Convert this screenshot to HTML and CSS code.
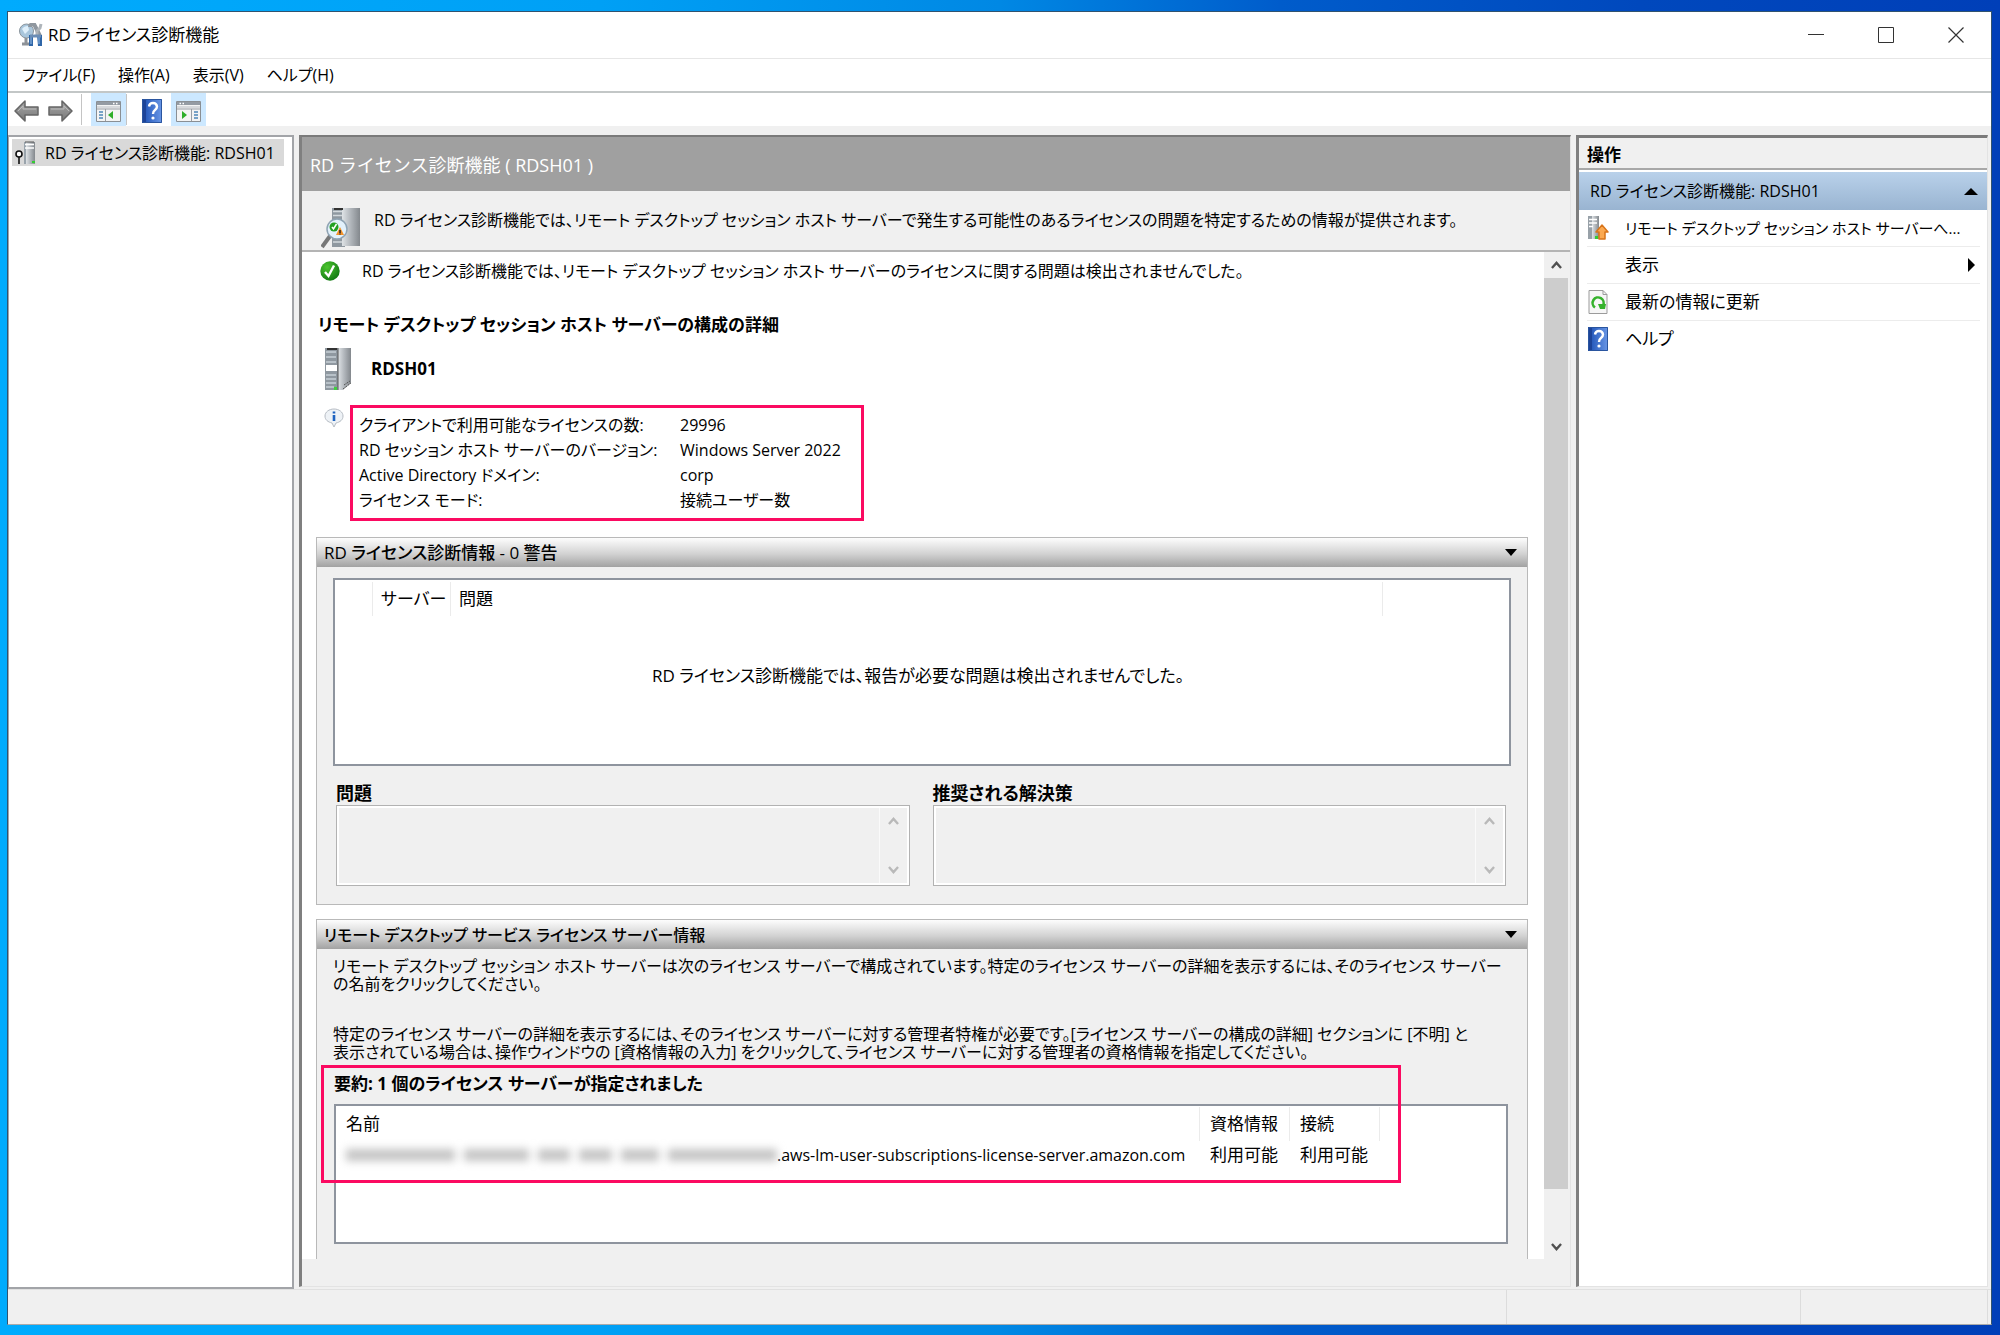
FILE: index.html
```html
<!DOCTYPE html>
<html lang="ja">
<head>
<meta charset="utf-8">
<meta name="viewport" content="width=device-width, initial-scale=1">
<title>RD ライセンス診断機能</title>
<link rel="stylesheet" href="styles.css">
</head>
<body>
<svg width="0" height="0" class="defs" aria-hidden="true">
  <defs>
    <linearGradient id="steel" x1="0" x2="1"><stop offset="0" stop-color="#dfe3e6"/><stop offset=".45" stop-color="#b4b9be"/><stop offset="1" stop-color="#83888d"/></linearGradient>
    <linearGradient id="grey" x1="0" x2="0" y1="0" y2="1"><stop offset="0" stop-color="#a8a8a8"/><stop offset="1" stop-color="#777"/></linearGradient>
    <linearGradient id="book" x1="0" x2="1"><stop offset="0" stop-color="#1d4aa4"/><stop offset=".25" stop-color="#2c5fc0"/><stop offset="1" stop-color="#6a97e6"/></linearGradient>
    <radialGradient id="ok" cx=".35" cy=".3" r=".8"><stop offset="0" stop-color="#4cc52f"/><stop offset="1" stop-color="#0d7410"/></radialGradient>
    <symbol id="i-tower" viewBox="0 0 28 44">
      <path d="M1 1h13v42H1z" fill="#8f98a0"/><path d="M14 1h13v35l-8 7h-5z" fill="url(#steel)"/>
      <path d="M14 1v42" stroke="#555" stroke-width="1"/>
      <path d="M2 5h10M2 10h10M2 15h10M2 28h10M2 32h10M2 36h10M2 40h8" stroke="#c6ced5" stroke-width="1.500"/>
      <path d="M3 2h10" stroke="#333" stroke-width="2"/><path d="M2 18h11v6H2z" fill="#fff"/>
      <path d="M10 40h3v3h-3z" fill="#3fd03f"/><path d="M19 42l8-6M20 38l6-4" stroke="#555" stroke-dasharray="2 1"/>
    </symbol>
    <symbol id="i-help" viewBox="0 0 20 24">
      <path d="M0 0h20v24H0z" fill="url(#book)"/><path d="M0 0h4v24H0z" fill="#1c4398"/><path d="M.5.5h19v23H.5z" fill="none" stroke="#2a559f"/>
      <path d="M7 7.500Q7.500 4 11 4t4 3.500q0 2-2 3.500t-2 4" fill="none" stroke="#fff" stroke-width="2.400"/><circle cx="11" cy="19" r="1.600" fill="#fff"/>
    </symbol>
    <symbol id="i-back" viewBox="0 0 25 22"><path d="M1 11 11 1v6h13v8H11v6z" fill="url(#grey)" stroke="#666" stroke-width="1.500" stroke-linejoin="round"/><path d="M4 11l5-5v3h13" fill="none" stroke="#bbb"/></symbol>
    <symbol id="i-pane" viewBox="0 0 25 21">
      <path d="M.5.5h24v20H.500z" fill="#f4f4f4" stroke="#8a8f94"/><path d="M1 1h23v3H1z" fill="#949ba3"/><path d="M17 2.500h1.500M20 2.500h1.500" stroke="#fff" stroke-width="1.500"/>
      <path d="M1 6h23" stroke="#b9bec4"/><path d="M9.500 8v12M1 8h23" stroke="#9a9fa5"/><path d="M3 11h4M3 14h4M3 17h4" stroke="#4d86b8" stroke-width="1.500"/>
    </symbol>
    <symbol id="i-up" viewBox="0 0 10 10"><path d="M1.500 7 5 3l3.500 4" fill="none" stroke="currentColor" stroke-width="1.800"/></symbol>
  </defs>
</svg>

<div class="window">
  <header class="titlebar">
    <svg class="app-icon" viewBox="0 0 24 24">
      <circle cx="7.500" cy="8" r="7" fill="#a9c6dc" stroke="#8a949c"/><path d="M3 6q2-3 6-3l1 4-4 4z" fill="#dfeffa"/>
      <path d="M7 15v5M3 21h7" stroke="#8d9298" stroke-width="3"/>
      <path d="M11 4q0-3 4-3l2 4 4 8" fill="none" stroke="#8f979f" stroke-width="4"/><path d="M22 1l-1 4-3 3v5" fill="none" stroke="#aeb4ba" stroke-width="3"/>
      <path d="M10 12h4v11h-4zM18 12h5v11h-4z" fill="#2f66a8"/><path d="M12 13v8M20 14v7" stroke="#9cc0e8"/><path d="M11 13h11" stroke="#6b8db5" stroke-width="3"/>
    </svg>
    <h1 class="title">RD ライセンス診断機能</h1>
    <div class="win-buttons">
      <button type="button" aria-label="最小化"><svg viewBox="0 0 16 16"><path d="M0 7.500h16" stroke="#333"/></svg></button>
      <button type="button" aria-label="最大化"><svg viewBox="0 0 16 16"><path d="M.5.5h15v15H.500z" fill="none" stroke="#333"/></svg></button>
      <button type="button" aria-label="閉じる"><svg viewBox="0 0 16 16"><path d="M.5.5l15 15M15.500.5l-15 15" stroke="#333" stroke-width="1.200"/></svg></button>
    </div>
  </header>

  <nav class="menubar">
    <button type="button">ファイル(F)</button>
    <button type="button">操作(A)</button>
    <button type="button">表示(V)</button>
    <button type="button">ヘルプ(H)</button>
  </nav>

  <div class="toolbar">
    <button type="button" aria-label="戻る"><svg width="25" height="22"><use href="#i-back"/></svg></button>
    <button type="button" aria-label="進む"><svg class="flip" width="25" height="22"><use href="#i-back"/></svg></button>
    <span class="tool-sep"></span>
    <button type="button" class="pressed" aria-label="コンソール ツリーの表示"><svg width="25" height="21" viewBox="0 0 25 21"><use href="#i-pane"/><path d="M12 14l5-4v8z" fill="#2fae2a"/></svg></button>
    <span class="tool-sep tight"></span>
    <button type="button" class="help" aria-label="ヘルプ"><svg width="20" height="24"><use href="#i-help"/></svg></button>
    <button type="button" class="pressed" aria-label="操作ウィンドウの表示"><svg width="25" height="21" viewBox="0 0 25 21"><g transform="translate(25 0) scale(-1 1)"><use href="#i-pane"/></g><path d="M11 14l-5-4v8z" fill="#2fae2a"/></svg></button>
  </div>

  <main class="panes">
    <nav class="tree">
      <a class="tree-item" href="#">
        <svg width="22" height="24" viewBox="0 0 22 24"><path d="M9 1h6v22H9z" fill="#9aa4ac"/><path d="M11 1h9v22h-9z" fill="url(#steel)"/><path d="M10 3.500h9M10 7h9" stroke="#fff" stroke-width="1.500"/><path d="M10 1h9" stroke="#555"/><path d="M17 20h3v2h-3z" fill="#3c3"/><circle cx="4" cy="13" r="3" fill="#fff" stroke="#111" stroke-width="1.600"/><path d="M4 16v7" stroke="#111" stroke-width="1.600"/></svg>
        <span>RD ライセンス診断機能: RDSH01</span>
      </a>
    </nav>

    <section class="detail">
      <h2 class="detail-title">RD ライセンス診断機能 ( RDSH01 )</h2>
      <div class="intro">
        <svg width="40" height="42" viewBox="0 0 40 42"><path d="M11 1h13v39H11z" fill="#8f98a0"/><path d="M21 1h18v38H21z" fill="url(#steel)"/><path d="M12 4.500h9M12 8.500h9M12 35h9" stroke="#d4d9dd" stroke-width="1.500"/><path d="M13 2h9" stroke="#333" stroke-width="2"/><path d="M9 29 1 40" stroke="#777" stroke-width="4"/><circle cx="16" cy="22" r="10" fill="#e3f1fb" stroke="#90a4b4" stroke-width="1.500"/><circle cx="13" cy="20" r="4.500" fill="#23a022"/><path d="M11 20l1.500 2 3-5" stroke="#fff" stroke-width="1.500" fill="none"/><path d="M19 20l4 8h-8z" fill="#f4922a"/><path d="M19 23v3M19 26.500v1" stroke="#222" stroke-width="1.500"/></svg>
        <p>RD ライセンス診断機能では、リモート デスクトップ セッション ホスト サーバーで発生する可能性のあるライセンスの問題を特定するための情報が提供されます。</p>
      </div>
      <div class="viewport">
        <div class="content">
          <p class="status">
            <svg width="20" height="20" viewBox="0 0 20 20"><circle cx="10" cy="10" r="9.700" fill="url(#ok)"/><path d="M5 11l3.500 4L14 4.500" fill="none" stroke="#fff" stroke-width="2.400"/></svg>
            <span>RD ライセンス診断機能では、リモート デスクトップ セッション ホスト サーバーのライセンスに関する問題は検出されませんでした。</span>
          </p>
          <h3 class="config-title">リモート デスクトップ セッション ホスト サーバーの構成の詳細</h3>
          <div class="host"><svg width="28" height="44"><use href="#i-tower"/></svg><strong>RDSH01</strong></div>
          <div class="facts">
            <svg width="20" height="20" viewBox="0 0 20 20"><path d="M10 1c5 0 9 3 9 7s-3 6-7 7l-2 4-2-4c-4-1-7-3-7-7s4-7 9-7z" fill="#eef2f6" stroke="#b6bcc4"/><path d="M10 7v6M10 3.500v2" stroke="#1e63c0" stroke-width="2.600"/></svg>
            <dl class="marked">
              <dt>クライアントで利用可能なライセンスの数:</dt><dd>29996</dd>
              <dt>RD セッション ホスト サーバーのバージョン:</dt><dd>Windows Server 2022</dd>
              <dt>Active Directory ドメイン:</dt><dd>corp</dd>
              <dt>ライセンス モード:</dt><dd>接続ユーザー数</dd>
            </dl>
          </div>

          <section class="panel">
            <h3 class="panel-head"><span>RD ライセンス診断情報 - 0 警告</span><button type="button" aria-label="折りたたむ"></button></h3>
            <div class="panel-body diag">
              <div class="list issues">
                <table>
                  <colgroup><col class="c-icon"><col class="c-server"><col><col class="c-rest"></colgroup>
                  <thead><tr><th></th><th>サーバー</th><th>問題</th><th></th></tr></thead>
                  <tbody><tr><td colspan="4" class="empty">RD ライセンス診断機能では、報告が必要な問題は検出されませんでした。</td></tr></tbody>
                </table>
              </div>
              <div class="boxes">
                <div class="field">
                  <label for="problem">問題</label>
                  <div class="area"><textarea id="problem" readonly></textarea><span class="mini-scroll"><svg width="13" height="13"><use href="#i-up"/></svg><svg class="down" width="13" height="13"><use href="#i-up"/></svg></span></div>
                </div>
                <div class="field">
                  <label for="fix">推奨される解決策</label>
                  <div class="area"><textarea id="fix" readonly></textarea><span class="mini-scroll"><svg width="13" height="13"><use href="#i-up"/></svg><svg class="down" width="13" height="13"><use href="#i-up"/></svg></span></div>
                </div>
              </div>
            </div>
          </section>

          <section class="panel last">
            <h3 class="panel-head"><span>リモート デスクトップ サービス ライセンス サーバー情報</span><button type="button" aria-label="折りたたむ"></button></h3>
            <div class="panel-body licenses">
              <p>リモート デスクトップ セッション ホスト サーバーは次のライセンス サーバーで構成されています。特定のライセンス サーバーの詳細を表示するには、そのライセンス サーバー<br>の名前をクリックしてください。</p>
              <p>特定のライセンス サーバーの詳細を表示するには、そのライセンス サーバーに対する管理者特権が必要です。[ライセンス サーバーの構成の詳細] セクションに [不明] と<br>表示されている場合は、操作ウィンドウの [資格情報の入力] をクリックして、ライセンス サーバーに対する管理者の資格情報を指定してください。</p>
              <div class="summary">
                <h4>要約: 1 個のライセンス サーバーが指定されました</h4>
                <div class="list servers">
                  <table>
                    <colgroup><col><col class="c-state"><col class="c-state"><col class="c-end"></colgroup>
                    <thead><tr><th>名前</th><th>資格情報</th><th>接続</th><th></th></tr></thead>
                    <tbody><tr><td><div class="server-name"><span class="redacted"><i class="w5"></i><i class="w3"></i><i class="w1"></i><i class="w1"></i><i class="w2"></i><i class="w5"></i></span><span>.aws-lm-user-subscriptions-license-server.amazon.com</span></div></td><td>利用可能</td><td>利用可能</td><td></td></tr></tbody>
                  </table>
                </div>
                <span class="mark"></span>
              </div>
            </div>
          </section>
        </div>
        <div class="scrollbar">
          <button type="button" aria-label="上へスクロール"><svg width="13" height="13"><use href="#i-up"/></svg></button>
          <span class="thumb"></span>
          <button type="button" aria-label="下へスクロール"><svg class="down" width="13" height="13"><use href="#i-up"/></svg></button>
        </div>
      </div>
    </section>

    <aside class="actions">
      <h2 class="actions-title">操作</h2>
      <button type="button" class="actions-group"><span>RD ライセンス診断機能: RDSH01</span><span class="tri-up"></span></button>
      <ul>
        <li><button type="button" class="long"><svg width="22" height="24" viewBox="0 0 22 24"><path d="M1 0h8v23H1z" fill="#98a1a8"/><path d="M5 0h7v23H5z" fill="url(#steel)"/><path d="M2 3.500h8M2 7h8M2 10.500h4" stroke="#fff" stroke-width="1.500"/><path d="M8 20h3v3H8z" fill="#3c3"/><path d="M15 9l6 7h-3v7h-6v-7H9z" fill="#fba951" stroke="#d8741a" stroke-width="1.500" stroke-linejoin="round"/></svg><span>リモート デスクトップ セッション ホスト サーバーへ...</span></button></li>
        <li><button type="button"><span class="no-icon"></span><span>表示</span><span class="tri-right"></span></button></li>
        <li><button type="button"><svg width="22" height="24" viewBox="0 0 22 24"><path d="M2 .5h14l4 4v19H2z" fill="#f6f6f6" stroke="#9b9b9b"/><path d="M16 .5v4h4" fill="none" stroke="#9b9b9b"/><path d="M8 17.500a5.500 5.500 0 1 1 8-2" fill="none" stroke="#35b22c" stroke-width="2.600"/><path d="M11 14h8l-1 5h-5z" fill="#35b22c"/></svg><span>最新の情報に更新</span></button></li>
        <li><button type="button"><svg width="22" height="24"><use href="#i-help"/></svg><span>ヘルプ</span></button></li>
      </ul>
    </aside>
  </main>

  <footer class="statusbar"><span></span><span></span><span></span></footer>
</div>
</body>
</html>
```

FILE: styles.css
```css
* { box-sizing: border-box; }

body {
  margin: 0;
  min-height: 100vh;
  display: flex;
  padding: 11px 8px 10px 7px;
  background: linear-gradient(90deg, #00abfd 0%, #00a0f5 30%, #0088e4 50%, #005ccb 64%, #0048bd 82%, #003fb8 100%);
  color: #000;
  font-family: "Open Sans", "Noto Sans CJK JP", sans-serif;
  font-size: 17px;
  line-height: 26px;
  font-feature-settings: "palt";
}

h1, h2, h3, h4, p, dl, dd, ul { margin: 0; padding: 0; }
ul { list-style: none; }
svg { display: block; flex: none; }
.defs { position: absolute; }

button {
  border: 0;
  padding: 0;
  background: none;
  font: inherit;
  font-feature-settings: inherit;
  color: inherit;
  text-align: left;
}

.window {
  flex: 1;
  min-width: 0;
  height: calc(100vh - 21px);
  display: flex;
  flex-direction: column;
  background: #f0f0f0;
  border: 1px solid #31536f;
  border-bottom-color: #aaa;
}

/* Title, menu and tool bars */
.titlebar {
  height: 47px;
  flex: none;
  display: flex;
  align-items: center;
  gap: 5px;
  padding-left: 11px;
  background: #fff;
  border-bottom: 1px solid #e6e6e6;
}
.app-icon { width: 24px; height: 24px; }
.title { flex: 1; font-size: 17px; font-weight: 400; }
.win-buttons { display: flex; }
.win-buttons button { width: 70px; height: 44px; display: grid; place-items: center; }
.win-buttons svg { width: 16px; height: 16px; }

.menubar {
  height: 34px;
  flex: none;
  display: flex;
  align-items: center;
  gap: 23px;
  padding-left: 14px;
  background: #fff;
  border-bottom: 2px solid #c3c7c7;
  font-size: 16px;
}

.toolbar {
  height: 33px;
  flex: none;
  display: flex;
  align-items: center;
  padding-left: 1px;
  background: #fff;
}
.toolbar button { display: grid; place-items: center; width: 34px; height: 33px; padding-top: 3px; }
.toolbar .pressed { width: 35px; background: #cce8ff; }
.toolbar .help { width: 38px; }
.tool-sep { width: 1px; height: 31px; margin: 0 9px 0 4px; background: #c4c4c4; }
.tool-sep.tight { margin: 0 6px 0 0; }
.flip { transform: scaleX(-1); }

/* Three panes */
.panes {
  flex: 1;
  min-height: 0;
  display: flex;
  gap: 5px;
  padding: 9px 3px 0 0;
}

.tree {
  width: 286px;
  flex: none;
  padding: 2px 8px 0 3px;
  background: #fff;
  border: 2px solid #a2a4a8;
  border-left-width: 1px;
}
.tree-item {
  display: flex;
  align-items: center;
  gap: 8px;
  height: 27px;
  padding-left: 3px;
  background: #d9d9d9;
  color: inherit;
  font-size: 16px;
  text-decoration: none;
  white-space: nowrap;
}

.detail {
  flex: 1;
  min-width: 0;
  display: flex;
  flex-direction: column;
  margin-bottom: 2px;
  padding-bottom: 27px;
  border-left: 3px solid #7f7f7f;
  border-top: 2px solid #7a7a7a;
  border-right: 1px solid #e3e3e3;
  border-bottom: 1px solid #e3e3e3;
}
.detail-title {
  flex: none;
  height: 54px;
  padding: 15px 8px;
  background: #a0a0a0;
  color: #fff;
  font-size: 18px;
  font-weight: 400;
  font-feature-settings: normal;
}
.intro {
  flex: none;
  display: flex;
  gap: 13px;
  height: 61px;
  padding: 16px 20px 0 19px;
  border-bottom: 2px solid #b4b4b4;
  font-size: 16px;
  white-space: nowrap;
}

.viewport { flex: 1; min-height: 0; display: flex; background: #fff; }
.content { flex: 1; min-width: 0; overflow: hidden; padding: 6px 16px 0 14px; }

.scrollbar { width: 26px; padding-right: 2px; flex: none; display: flex; flex-direction: column; background: #f0f0f0; color: #505050; }
.scrollbar button { height: 26px; display: grid; place-items: center; }
.scrollbar .thumb { flex: 1; margin-bottom: 44px; background: #cdcdcd; }
.down { transform: scaleY(-1); }

.status { display: flex; gap: 22px; align-items: center; padding-left: 4px; height: 26px; font-size: 16px; white-space: nowrap; }
.config-title { margin-top: 28px; padding-left: 2px; font-size: 17px; }
.host { display: flex; align-items: center; gap: 19px; margin-top: 9px; padding-left: 8px; }
.facts { display: flex; gap: 6px; margin-top: 14px; padding-left: 8px; }
.facts svg { margin-top: 3px; }
.marked {
  display: grid;
  grid-template-columns: 321px 1fr;
  width: 514px;
  padding: 5px 6px;
  border: 3px solid #fb0a61;
  font-size: 16px;
  line-height: 25px;
  white-space: nowrap;
}

/* Collapsible panels */
.panel { margin-top: 16px; background: #f0f0f0; border: 1px solid #b9b9b9; }
.panel-head {
  display: flex;
  align-items: center;
  justify-content: space-between;
  height: 29px;
  padding: 0 10px 0 7px;
  background: linear-gradient(#fdfdfd, #d2d2d2 55%, #a2a2a2);
  font-size: 17px;
  font-weight: 500;
}
.panel-head button { border: 6px solid transparent; border-top: 7px solid #000; border-bottom: 0; }
.diag { padding: 11px 16px 18px; }
.list { background: #fff; border: 2px solid #8e949e; }
.issues { height: 188px; }
table { width: 100%; border-collapse: collapse; table-layout: fixed; }
th, td { padding: 0 8px; text-align: left; font-weight: 400; white-space: nowrap; }
th { height: 37px; background: linear-gradient(#ebebeb, #ebebeb) right center / 1px 34px no-repeat; }
th:last-child { background: none; }
.c-icon { width: 38px; }
.c-server { width: 78px; }
.c-rest { width: 126px; }
.empty { height: 118px; padding-right: 16px; text-align: center; }

.boxes { display: grid; grid-template-columns: 1fr 1fr; gap: 23px; margin-top: 15px; padding: 0 5px 0 3px; }
.field { display: grid; }
.field label { font-size: 18px; font-weight: 700; line-height: 24px; }
.area { display: flex; height: 81px; padding: 2px; background: #fff; border: 1px solid #b2b2b2; }
textarea { flex: 1; min-width: 0; border: 0; border-right: 1px solid #fafafa; padding: 0; margin: 0; background: #f0f0f0; resize: none; outline: 0; display: block; }
.mini-scroll { width: 27px; display: flex; flex-direction: column; justify-content: space-between; align-items: center; padding: 7px 0; background: #f0f0f0; color: #b9b9b9; }

.last { margin-top: 14px; }
.last .panel-head { font-size: 16px; }
.licenses { padding: 8px 16px 60px; }
.licenses p { margin-bottom: 32px; font-size: 16px; line-height: 18px; white-space: nowrap; }
.summary { position: relative; margin-top: -22px; padding: 0 3px 0 1px; }
.summary h4 { padding-bottom: 7px; font-size: 17px; }
.servers { height: 140px; }
.servers td { height: 26px; }
.servers td, .servers th { padding: 0 10px; }
.servers th { height: 36px; }
.c-state { width: 90px; }
.c-end { width: 126px; }
.server-name { display: flex; align-items: center; font-size: 16px; }
.redacted { display: flex; flex: none; gap: 9px; width: 431px; filter: blur(4px); }
.redacted i { height: 12px; background: #c4c4c4; }
.w1 { flex: 32; }
.w2 { flex: 38; }
.w3 { flex: 64; }
.w5 { flex: 107; }
.mark { position: absolute; left: -12px; right: 110px; top: -6px; height: 118px; border: 3px solid #fb0a61; }

/* Actions pane */
.actions {
  width: 412px;
  flex: none;
  margin-bottom: 2px;
  background: #fff;
  border-left: 3px solid #7f7f7f;
  border-top: 3px solid #7a7a7a;
  border-right: 1px solid #e3e3e3;
  border-bottom: 1px solid #e3e3e3;
}
.actions-title { height: 32px; padding: 4px 8px 0; background: #f0f0f0; border-bottom: 2px solid #a8a8a8; font-size: 17px; }
.actions-group {
  display: flex;
  align-items: center;
  justify-content: space-between;
  width: 100%;
  height: 38px;
  margin-top: 2px;
  padding: 0 9px 0 11px;
  background: linear-gradient(#b9d1ea, #99b4d1);
  font-size: 16px;
}
.tri-up { border: 7px solid transparent; border-bottom: 7px solid #000; border-top: 0; }
.tri-right { margin-left: auto; border: 7px solid transparent; border-left: 7px solid #000; border-right: 0; }
.actions ul { padding: 0 7px 0 8px; }
.actions li { border-bottom: 1px solid #ececec; }
.actions li:last-child { border-bottom: 0; }
.actions li button { display: flex; align-items: center; gap: 16px; width: 100%; height: 36px; padding-right: 5px; white-space: nowrap; }
.actions li .long { font-size: 15px; }
.no-icon { width: 22px; }

.statusbar { height: 35px; flex: none; display: flex; justify-content: flex-end; padding-right: 3px; border-top: 1px solid #e0e0e0; }
.statusbar span { width: 294px; border-right: 1px solid #dcdcdc; }
.statusbar span:last-child { width: 187px; }
```
